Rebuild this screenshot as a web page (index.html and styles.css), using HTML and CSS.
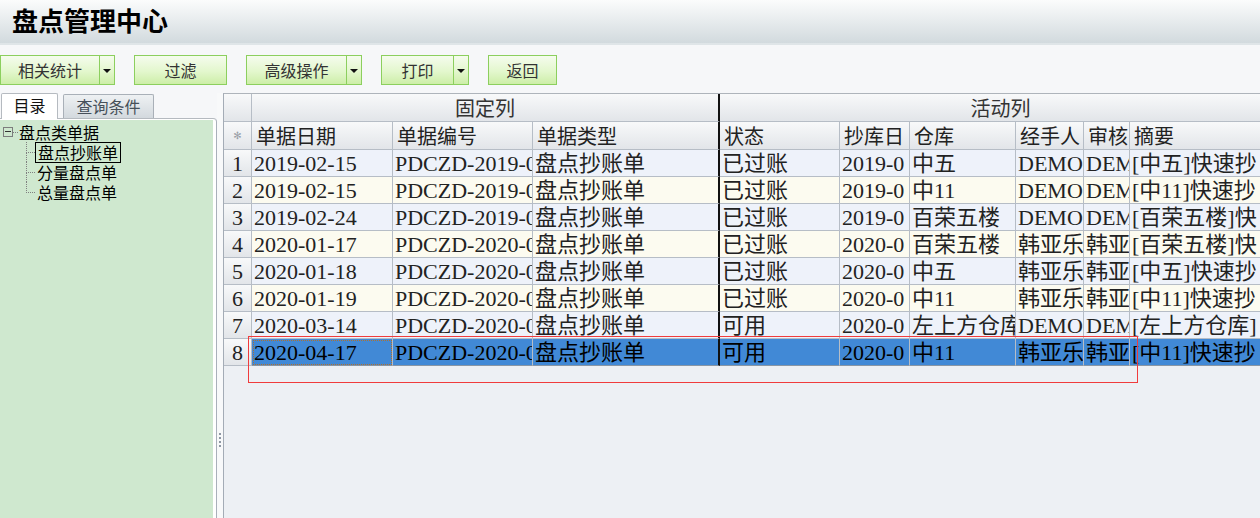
FILE: index.html
```html
<!DOCTYPE html>
<html lang="zh-CN">
<head>
  <meta charset="UTF-8">
  <title>盘点管理中心</title>
  <link rel="stylesheet" href="styles.css">
</head>
<body>
  <header class="titlebar">
    <h1>盘点管理中心</h1>
  </header>

  <div class="toolbar">
    <div class="split">
      <button class="btn w-stat">相关统计</button><button class="btn-drop"></button>
    </div>
    <button class="btn w-filter">过滤</button>
    <div class="split">
      <button class="btn w-adv">高级操作</button><button class="btn-drop"></button>
    </div>
    <div class="split">
      <button class="btn w-print">打印</button><button class="btn-drop"></button>
    </div>
    <button class="btn w-back">返回</button>
  </div>

  <div class="main">
    <aside class="side">
      <div class="tabs">
        <span class="tab active">目录</span>
        <span class="tab">查询条件</span>
      </div>
      <div class="tab-panel">
        <div class="tree-area">
          <div class="tree-root"><span class="toggle"></span>盘点类单据</div>
          <ul class="tree">
            <li><span class="node selected">盘点抄账单</span></li>
            <li><span class="node">分量盘点单</span></li>
            <li><span class="node">总量盘点单</span></li>
          </ul>
        </div>
      </div>
    </aside>

    <div class="splitter"><span class="grip"></span></div>

    <div class="grid">
      <table>
        <colgroup>
          <col class="c-ind"><col class="c-date"><col class="c-no"><col class="c-type">
          <col class="c-state"><col class="c-cdate"><col class="c-store"><col class="c-hand">
          <col class="c-audit"><col class="c-memo">
        </colgroup>
        <thead>
          <tr class="group">
            <th class="ind"></th>
            <th colspan="3" class="fixed-end">固定列</th>
            <th colspan="6">活动列</th>
          </tr>
          <tr class="cols">
            <th class="ind star">✻</th>
            <th>单据日期</th><th>单据编号</th><th>单据类型</th>
            <th>状态</th><th>抄库日</th><th>仓库</th><th>经手人</th><th>审核</th><th>摘要</th>
          </tr>
        </thead>
        <tbody>
          <tr>
            <td class="ind">1</td><td>2019-02-15</td><td>PDCZD-2019-02</td><td>盘点抄账单</td>
            <td>已过账</td><td>2019-0</td><td>中五</td><td>DEMO</td><td>DEMO</td><td>[中五]快速抄</td>
          </tr>
          <tr>
            <td class="ind">2</td><td>2019-02-15</td><td>PDCZD-2019-02</td><td>盘点抄账单</td>
            <td>已过账</td><td>2019-0</td><td>中11</td><td>DEMO</td><td>DEMO</td><td>[中11]快速抄</td>
          </tr>
          <tr>
            <td class="ind">3</td><td>2019-02-24</td><td>PDCZD-2019-02</td><td>盘点抄账单</td>
            <td>已过账</td><td>2019-0</td><td>百荣五楼</td><td>DEMO</td><td>DEMO</td><td>[百荣五楼]快</td>
          </tr>
          <tr>
            <td class="ind">4</td><td>2020-01-17</td><td>PDCZD-2020-01</td><td>盘点抄账单</td>
            <td>已过账</td><td>2020-0</td><td>百荣五楼</td><td>韩亚乐</td><td>韩亚</td><td>[百荣五楼]快</td>
          </tr>
          <tr>
            <td class="ind">5</td><td>2020-01-18</td><td>PDCZD-2020-01</td><td>盘点抄账单</td>
            <td>已过账</td><td>2020-0</td><td>中五</td><td>韩亚乐</td><td>韩亚</td><td>[中五]快速抄</td>
          </tr>
          <tr>
            <td class="ind">6</td><td>2020-01-19</td><td>PDCZD-2020-01</td><td>盘点抄账单</td>
            <td>已过账</td><td>2020-0</td><td>中11</td><td>韩亚乐</td><td>韩亚</td><td>[中11]快速抄</td>
          </tr>
          <tr>
            <td class="ind">7</td><td>2020-03-14</td><td>PDCZD-2020-03</td><td>盘点抄账单</td>
            <td>可用</td><td>2020-0</td><td>左上方仓库</td><td>DEMO</td><td>DEMO</td><td>[左上方仓库]</td>
          </tr>
          <tr class="selected">
            <td class="ind">8</td><td class="focus">2020-04-17</td><td>PDCZD-2020-04</td><td>盘点抄账单</td>
            <td>可用</td><td>2020-0</td><td>中11</td><td>韩亚乐</td><td>韩亚</td><td>[中11]快速抄</td>
          </tr>
        </tbody>
      </table>
      <div class="mark"></div>
    </div>
  </div>
</body>
</html>
```

FILE: styles.css
```css
* {
  box-sizing: border-box;
}
body {
  margin: 0;
  width: 1260px;
  height: 518px;
  overflow: hidden;
  background-color: #f6f7f9;
  font-family: "Noto Sans CJK SC", sans-serif;
  color: #222;
}

/* title */
.titlebar {
  height: 45px;
  padding-left: 12px;
  background: linear-gradient(#fbfcfc, #d2dade);
  border-bottom: 2px solid #dfe5e8;
}
.titlebar h1 {
  margin: 0;
  font-size: 26px;
  line-height: 40px;
  font-weight: bold;
  color: #000;
}

/* toolbar */
.toolbar {
  display: flex;
  align-items: flex-start;
  gap: 19px;
  height: 48px;
  padding-top: 10px;
}
.split {
  display: flex;
}
.btn,
.btn-drop {
  height: 30px;
  border: 1px solid #8ccf5e;
  background: linear-gradient(#f5fcee, #e3f7cd 55%, #cdeea8);
  font-family: "Noto Sans CJK SC", sans-serif;
  font-size: 16px;
  color: #333;
  padding: 0;
  cursor: pointer;
}
.btn-drop {
  width: 15px;
  border-left: none;
  position: relative;
}
.btn-drop::after {
  content: "";
  position: absolute;
  left: 3px;
  top: 13px;
  border-left: 4px solid transparent;
  border-right: 4px solid transparent;
  border-top: 4px solid #111;
}
.w-stat { width: 100px; }
.w-filter { width: 93px; }
.w-adv { width: 101px; }
.w-print { width: 73px; }
.w-back { width: 69px; }

/* main area */
.main {
  display: flex;
  height: 425px;
}
.side {
  width: 217px;
  display: flex;
  flex-direction: column;
}
.tabs {
  display: flex;
  align-items: flex-end;
  gap: 5px;
  height: 25px;
  padding-left: 1px;
}
.tab {
  width: 91px;
  height: 24px;
  border: 1px solid #a9b0b8;
  border-bottom: none;
  border-radius: 2px 2px 0 0;
  background: linear-gradient(#eef1f3, #d3d9de);
  font-size: 16px;
  line-height: 22px;
  text-align: center;
  color: #46505a;
}
.tab.active {
  width: 57px;
  height: 26px;
  margin-bottom: -1px;
  position: relative;
  background: #fff;
  border-color: #b5bac0;
  color: #111;
}
.tab-panel {
  flex: 1;
  background: #fff;
  border-top: 1px solid #b5bac0;
  border-right: 1px solid #a9b0ba;
  border-top-right-radius: 4px;
  padding: 1px 3px 0 0;
}
.tree-area {
  height: 100%;
  background-color: #cfe8cf;
  padding-top: 2px;
  font-size: 16px;
  color: #000;
}
.tree-root {
  height: 20px;
  line-height: 20px;
  padding-left: 3px;
  display: flex;
  align-items: center;
}
.toggle {
  width: 10px;
  height: 10px;
  border: 1px solid #7d7d7d;
  margin-right: 6px;
  position: relative;
}
.toggle::before {
  content: "";
  position: absolute;
  left: 1px;
  right: 1px;
  top: 3px;
  border-top: 1px solid #333;
}
.toggle::after {
  content: "";
  position: absolute;
  left: 9px;
  top: 4px;
  width: 5px;
  border-top: 1px dotted #808080;
}
.tree {
  list-style: none;
  margin: 0 0 0 26px;
  padding: 0;
}
.tree li {
  position: relative;
  height: 20px;
  line-height: 20px;
  padding-left: 9px;
}
.tree li::before {
  content: "";
  position: absolute;
  left: 0;
  top: 0;
  width: 8px;
  height: 10px;
  border-left: 1px dotted #808080;
  border-bottom: 1px dotted #808080;
}
.tree li:not(:last-child)::after {
  content: "";
  position: absolute;
  left: 0;
  top: 10px;
  bottom: 0;
  border-left: 1px dotted #808080;
}
.node {
  display: inline-block;
  padding: 0 2px;
}
.node.selected {
  height: 21px;
  line-height: 19px;
  border: 1px solid #000;
  vertical-align: top;
}

/* splitter */
.splitter {
  width: 6px;
  background: #f8f9fa;
  display: flex;
  justify-content: center;
  padding-top: 340px;
}
.grip {
  width: 2px;
  height: 14px;
  background: repeating-linear-gradient(#8e97a3 0 2px, transparent 2px 4px);
}

/* grid */
.grid {
  flex: 1;
  position: relative;
  overflow: hidden;
  background-color: #edf0f4;
  border-left: 1px solid #a4acb6;
  border-top: 1px solid #aeb4bb;
}
table {
  border-collapse: separate;
  border-spacing: 0;
  table-layout: fixed;
  width: 1058px;
}
.c-ind { width: 28px; }
.c-date { width: 141px; }
.c-no { width: 140px; }
.c-type { width: 187px; }
.c-state { width: 120px; }
.c-cdate { width: 70px; }
.c-store { width: 106px; }
.c-hand { width: 68px; }
.c-audit { width: 46px; }
.c-memo { width: 152px; }
th,
td {
  padding: 0 2px;
  border-right: 1px solid #b6bdc6;
  border-bottom: 1px solid #b6bdc6;
  white-space: nowrap;
  overflow: hidden;
  text-align: left;
}
th {
  background: linear-gradient(#f8f9fa, #e2e5e9);
  font-weight: normal;
  color: #222;
  line-height: 26px;
}
.group th {
  height: 28px;
  font-size: 20px;
  text-align: center;
  color: #333;
}
.cols th {
  height: 28px;
  font-size: 20px;
  padding-left: 4px;
}
.fixed-end,
tr > :nth-child(4) {
  border-right: 2px solid #111;
}
.group > :nth-child(4) {
  border-right: 1px solid #b6bdc6;
}
td {
  height: 27px;
  font-family: "Liberation Serif", "Noto Sans CJK SC", serif;
  font-size: 22px;
  line-height: 25px;
  background-color: #eef2fa;
}
tbody tr:nth-child(even) td {
  background-color: #fcfbf0;
}
.ind {
  padding: 0;
  text-align: center;
}
td.ind,
tbody tr:nth-child(even) td.ind {
  background: linear-gradient(#f8f9fa, #e2e5e9);
}
.cols .star {
  font-family: "DejaVu Sans", sans-serif;
  font-size: 10px;
  color: #9aa0a8;
  text-align: center;
  padding: 0;
}
tr.selected td:not(.ind) {
  background-color: #4189d6;
  color: #000;
  border-bottom-color: #8996a4;
}
tr.selected > :nth-child(4) {
  border-right-color: #111;
}
.focus {
  outline: 1px dotted #b0702c;
  outline-offset: -2px;
}

/* highlight annotation */
.mark {
  position: absolute;
  left: 24px;
  top: 242px;
  width: 890px;
  height: 47px;
  border: 1px solid #f03c3c;
}
```
